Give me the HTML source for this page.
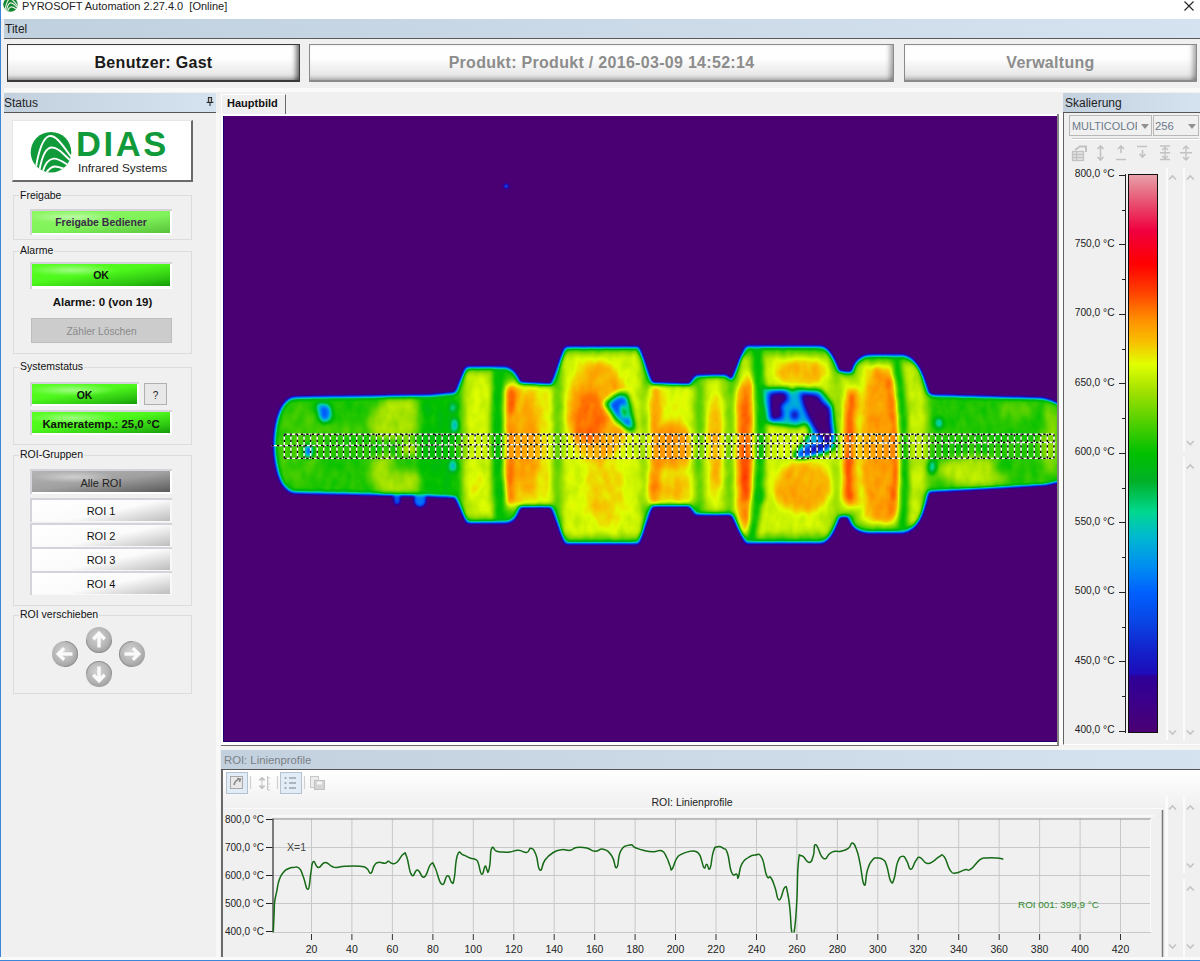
<!DOCTYPE html>
<html><head><meta charset="utf-8">
<style>
*{margin:0;padding:0;box-sizing:border-box}
html,body{width:1200px;height:961px;overflow:hidden;background:#f0f0f0;font-family:"Liberation Sans",sans-serif;font-size:12px;color:#222}
.a{position:absolute}
#win{position:absolute;left:0;top:0;width:1200px;height:961px;background:#f0f0f0}
#title{left:0;top:0;width:1200px;height:19px;background:#fff}
#menu{left:4px;top:19px;width:1196px;height:20px;background:linear-gradient(90deg,#c1d0de,#d5e3f1);border-bottom:1px solid #5a5a5a}
.btn3{background:linear-gradient(#fff 0%,#fdfdfd 40%,#eaeaea 80%,#e4e4e4 100%);border:1px solid #3a3a3a;border-bottom-width:2px;box-shadow:inset -6px 0 5px -3px rgba(0,0,0,.55),inset 0 -5px 4px -3px rgba(0,0,0,.35);font-weight:bold;font-size:16px;text-align:center;line-height:36px;letter-spacing:0.3px;color:#1a1a1a}
.btn3.dis{border-color:#8a8a8a;box-shadow:inset -6px 0 5px -3px rgba(0,0,0,.35),inset 0 -5px 4px -3px rgba(0,0,0,.25);color:#8c8c8c}
.ph{height:20px;background:linear-gradient(90deg,#c3d1df,#d5e3f0);border-bottom:1px solid #555;font-size:12px;line-height:20px;padding-left:0px}
.grp{border:1px solid #dcdcdc;}
.gl{font-size:10.5px;background:#f0f0f0;padding:0 1px;color:#111;line-height:13px}
.gbtn{background:radial-gradient(ellipse 45px 6px at 40px 6px,rgba(255,255,255,.45),rgba(255,255,255,0)),linear-gradient(172deg,#58ff22 0%,#4ef81c 45%,#2cc410 80%,#149a08 100%);font-weight:bold;font-size:10.5px;text-align:center;color:#111}
.frame{background:#fff;border-top:2px solid #d6d2da;border-left:2px solid #d6d2da}
</style></head><body>
<div id="win">
<div id="title" class="a"></div>
<div class="a" style="left:22px;top:0px;font-size:11px;line-height:13px;color:#222">PYROSOFT Automation 2.27.4.0&nbsp;&nbsp;[Online]</div>
<svg class="a" style="left:3px;top:-3px" width="15" height="15" viewBox="0 0 42 42"><defs><clipPath id="lc2"><circle cx="21" cy="21.2" r="20.3"/></clipPath></defs><circle cx="21" cy="21.2" r="20.3" fill="#15862f"/><g clip-path="url(#lc2)" fill="none" stroke="#e8f0e8" stroke-width="3"><path d="M5.8 37 C8.5 21 12 7.5 19 5.2 C26 3.2 33 15 42 27"/><path d="M9.4 39.5 C11.8 26 15 17.3 21.3 16.5 C28 15.8 34 24 42 31"/><path d="M12.4 41.5 C14.8 33 18 28 23.6 27.6 C29 27.2 33 31 42 36.5"/></g></svg>
<svg class="a" style="left:1183px;top:0px" width="12" height="12"><path d="M1.5 1.5 L10.5 10.5 M10.5 1.5 L1.5 10.5" stroke="#222" stroke-width="1.1"/></svg>
<div id="menu" class="a"><span class="a" style="left:1px;top:2.5px;font-size:12px">Titel</span></div>

<div class="a" style="left:4px;top:39px;width:1196px;height:50px;background:#f0f0f0"></div>
<div class="a btn3" style="left:7px;top:44px;width:293px;height:38px">Benutzer: Gast</div>
<div class="a btn3 dis" style="left:309px;top:44px;width:585px;height:38px">Produkt: Produkt / 2016-03-09 14:52:14</div>
<div class="a btn3 dis" style="left:904px;top:44px;width:293px;height:38px">Verwaltung</div>
<div class="a" style="left:4px;top:88px;width:1196px;height:4px;background:#fafafa"></div>

<!-- Status panel -->
<div class="a ph" style="left:4px;top:93px;width:212px">Status<svg class="a" style="left:201.5px;top:3.5px" width="8" height="10" viewBox="0 0 10 12"><path d="M2.5 0.5 H7.5 M3 0.5 V6.5 M7 0.5 V6.5 M0.8 6.5 H9.2 M5 6.5 V11" fill="none" stroke="#111" stroke-width="1.2"/><path d="M3.6 1 H6.4 V6 H3.6 Z" fill="#bbb"/></svg></div>
<div class="a" style="left:12px;top:120px;width:181px;height:62px;background:#fff;border-top:1px solid #e6e6e6;border-left:1px solid #e6e6e6;border-right:2px solid #6a6a6a;border-bottom:2px solid #6a6a6a"></div>
<svg class="a" style="left:30px;top:131px" width="42" height="42" viewBox="0 0 42 42">
 <defs><clipPath id="lc"><circle cx="21" cy="21.2" r="20.3"/></clipPath></defs>
 <circle cx="21" cy="21.2" r="20.3" fill="#119a3a"/>
 <g clip-path="url(#lc)" fill="none" stroke="#fff" stroke-width="1.9">
  <path d="M5.8 37 C8.5 21 12 7.5 19 5.2 C26 3.2 33 15 42 27"/>
  <path d="M9.4 39.5 C11.8 26 15 17.3 21.3 16.5 C28 15.8 34 24 42 31"/>
  <path d="M12.4 41.5 C14.8 33 18 28 23.6 27.6 C29 27.2 33 31 42 36.5"/>
  <path d="M15.9 42.5 C18.6 38 21 35.6 24.8 35.5 C28.5 35.4 31 36.8 42 40.5"/>
 </g>
</svg>
<div class="a" style="left:76px;top:126px;font-size:34.5px;font-weight:bold;color:#119a3a;letter-spacing:2.6px;line-height:36px">DIAS</div>
<div class="a" style="left:78px;top:160.5px;font-size:11.8px;color:#222;line-height:14px">Infrared Systems</div>

<div class="a grp" style="left:13px;top:195px;width:179px;height:45px"></div>
<div class="a gl" style="left:19px;top:189px">Freigabe</div>
<div class="a frame" style="left:30px;top:209px;width:142px;height:26px"></div>
<div class="a gbtn" style="left:32px;top:211px;width:138px;height:22px;line-height:22px;background:radial-gradient(ellipse 45px 6px at 40px 6px,rgba(255,255,255,.45),rgba(255,255,255,0)),linear-gradient(172deg,#8cf862 0%,#80f25a 55%,#58c23a 100%);color:#3b2d4a;font-size:10.5px">Freigabe Bediener</div>

<div class="a grp" style="left:13px;top:251px;width:179px;height:103px"></div>
<div class="a gl" style="left:19px;top:244px">Alarme</div>
<div class="a frame" style="left:30px;top:262px;width:142px;height:27px"></div>
<div class="a gbtn" style="left:32px;top:264px;width:138px;height:22px;line-height:23px">OK</div>
<div class="a" style="left:13px;top:296px;width:179px;text-align:center;font-weight:bold;font-size:11.5px;color:#111">Alarme: 0 (von 19)</div>
<div class="a" style="left:31px;top:318px;width:141px;height:25px;background:#cccccc;border:1px solid #bdbdbd;color:#8a8a8a;font-size:10.2px;text-align:center;line-height:25px">Zähler Löschen</div>

<div class="a grp" style="left:13px;top:367px;width:179px;height:78px"></div>
<div class="a gl" style="left:19px;top:360px">Systemstatus</div>
<div class="a frame" style="left:30px;top:382px;width:109px;height:24px"></div>
<div class="a gbtn" style="left:32px;top:384px;width:105px;height:20px;line-height:22px">OK</div>
<div class="a" style="left:144px;top:383px;width:23px;height:22px;background:#e8e8e8;border:1px solid #b0b0b0;text-align:center;line-height:23px;font-size:10px">?</div>
<div class="a frame" style="left:30px;top:410px;width:142px;height:25px"></div>
<div class="a gbtn" style="left:32px;top:412px;width:138px;height:21px;line-height:24px;font-size:11.4px">Kameratemp.: 25,0 °C</div>

<div class="a grp" style="left:13px;top:455px;width:179px;height:151px"></div>
<div class="a gl" style="left:19px;top:448px">ROI-Gruppen</div>
<div class="a frame" style="left:30px;top:469px;width:142px;height:25px"></div>
<div class="a" style="left:32px;top:471px;width:138px;height:21px;line-height:24px;text-align:center;font-size:11px;background:radial-gradient(ellipse 42px 6px at 42px 6px,rgba(255,255,255,.45),rgba(255,255,255,0)),linear-gradient(172deg,#b4b4b4 0%,#a0a0a0 50%,#5a5a5a 100%);color:#222">Alle ROI</div>
<div class="a frame" style="left:30px;top:498px;width:142px;height:24px;background:#f8f8f8"></div>
<div class="a" style="left:32px;top:500px;width:138px;height:21px;line-height:23.5px;text-align:center;font-size:11px;background:linear-gradient(168deg,#ffffff 0%,#fbfbfb 55%,#bdbdbd 100%);color:#111">ROI 1</div>
<div class="a frame" style="left:30px;top:523px;width:142px;height:24px;background:#f8f8f8"></div>
<div class="a" style="left:32px;top:525px;width:138px;height:21px;line-height:23.5px;text-align:center;font-size:11px;background:linear-gradient(168deg,#ffffff 0%,#fbfbfb 55%,#bdbdbd 100%);color:#111">ROI 2</div>
<div class="a frame" style="left:30px;top:547px;width:142px;height:24px;background:#f8f8f8"></div>
<div class="a" style="left:32px;top:549px;width:138px;height:21px;line-height:23.5px;text-align:center;font-size:11px;background:linear-gradient(168deg,#ffffff 0%,#fbfbfb 55%,#bdbdbd 100%);color:#111">ROI 3</div>
<div class="a frame" style="left:30px;top:571px;width:142px;height:24px;background:#f8f8f8"></div>
<div class="a" style="left:32px;top:573px;width:138px;height:21px;line-height:23.5px;text-align:center;font-size:11px;background:linear-gradient(168deg,#ffffff 0%,#fbfbfb 55%,#bdbdbd 100%);color:#111">ROI 4</div>


<div class="a grp" style="left:13px;top:615px;width:179px;height:79px"></div>
<div class="a gl" style="left:19px;top:608px">ROI verschieben</div>
<svg class="a" style="left:85px;top:626px" width="28" height="28" viewBox="0 0 28 28">
<defs><radialGradient id="rg99640" cx="45%" cy="40%" r="65%"><stop offset="0" stop-color="#d4d4d4"/><stop offset="0.65" stop-color="#b4b4b4"/><stop offset="1" stop-color="#9a9a9a"/></radialGradient></defs>
<circle cx="14" cy="14" r="13" fill="url(#rg99640)"/>
<circle cx="14" cy="14" r="12.6" fill="none" stroke="#8c8c8c" stroke-width="0.9" transform="rotate(0 14 14)" stroke-dasharray="40 80"/>
<g transform="rotate(0 14 14)" fill="none" stroke="#fafafa" stroke-width="3.4"><path d="M14 7.5 V21.5"/><path d="M8.3 13.2 L14 7.3 L19.7 13.2"/></g>
</svg>
<svg class="a" style="left:51px;top:640px" width="28" height="28" viewBox="0 0 28 28">
<defs><radialGradient id="rg65654" cx="45%" cy="40%" r="65%"><stop offset="0" stop-color="#d4d4d4"/><stop offset="0.65" stop-color="#b4b4b4"/><stop offset="1" stop-color="#9a9a9a"/></radialGradient></defs>
<circle cx="14" cy="14" r="13" fill="url(#rg65654)"/>
<circle cx="14" cy="14" r="12.6" fill="none" stroke="#8c8c8c" stroke-width="0.9" transform="rotate(-90 14 14)" stroke-dasharray="40 80"/>
<g transform="rotate(-90 14 14)" fill="none" stroke="#fafafa" stroke-width="3.4"><path d="M14 7.5 V21.5"/><path d="M8.3 13.2 L14 7.3 L19.7 13.2"/></g>
</svg>
<svg class="a" style="left:118px;top:640px" width="28" height="28" viewBox="0 0 28 28">
<defs><radialGradient id="rg132654" cx="45%" cy="40%" r="65%"><stop offset="0" stop-color="#d4d4d4"/><stop offset="0.65" stop-color="#b4b4b4"/><stop offset="1" stop-color="#9a9a9a"/></radialGradient></defs>
<circle cx="14" cy="14" r="13" fill="url(#rg132654)"/>
<circle cx="14" cy="14" r="12.6" fill="none" stroke="#8c8c8c" stroke-width="0.9" transform="rotate(90 14 14)" stroke-dasharray="40 80"/>
<g transform="rotate(90 14 14)" fill="none" stroke="#fafafa" stroke-width="3.4"><path d="M14 7.5 V21.5"/><path d="M8.3 13.2 L14 7.3 L19.7 13.2"/></g>
</svg>
<svg class="a" style="left:85px;top:660px" width="28" height="28" viewBox="0 0 28 28">
<defs><radialGradient id="rg99674" cx="45%" cy="40%" r="65%"><stop offset="0" stop-color="#d4d4d4"/><stop offset="0.65" stop-color="#b4b4b4"/><stop offset="1" stop-color="#9a9a9a"/></radialGradient></defs>
<circle cx="14" cy="14" r="13" fill="url(#rg99674)"/>
<circle cx="14" cy="14" r="12.6" fill="none" stroke="#8c8c8c" stroke-width="0.9" transform="rotate(180 14 14)" stroke-dasharray="40 80"/>
<g transform="rotate(180 14 14)" fill="none" stroke="#fafafa" stroke-width="3.4"><path d="M14 7.5 V21.5"/><path d="M8.3 13.2 L14 7.3 L19.7 13.2"/></g>
</svg>


<!-- center -->
<div class="a" style="left:216px;top:113px;width:4px;height:846px;background:#f8f8f8"></div>
<div class="a" style="left:221px;top:94px;width:65px;height:20px;background:#f0f0f0;border-left:1px solid #fff;border-top:1px solid #fff;border-right:1px solid #6a6a6a"></div>
<div class="a" style="left:227px;top:97px;font-weight:bold;font-size:11px;color:#111">Hauptbild</div>
<div class="a" style="left:221px;top:114px;width:838px;height:632px;background:#fff;border-right:2px solid #858585;border-bottom:1px solid #6a6a6a"></div>
<div class="a" id="img" style="left:223px;top:116px;width:834px;height:626px;background:#4b0073;border-left:1px solid #1c006c;border-bottom:1px solid #1c006c;overflow:hidden"><!--T--><svg class="a" style="left:-1px;top:0" width="835" height="626" viewBox="223 116 835 626">
<defs>
<filter id="pal" x="200" y="90" width="900" height="700" filterUnits="userSpaceOnUse" color-interpolation-filters="sRGB">
<feGaussianBlur stdDeviation="1.6"/>
<feComponentTransfer><feFuncR type="table" tableValues="0.294 0.271 0.247 0.224 0.202 0.180 0.101 0.081 0.064 0.052 0.039 0.024 0.008 0.000 0.000 0.000 0.000 0.000 0.000 0.000 0.000 0.000 0.000 0.000 0.000 0.000 0.114 0.228 0.342 0.456 0.570 0.678 0.778 0.878 0.925 0.973 0.986 1.000 1.000 1.000 1.000 1.000 1.000 0.980 0.961 0.941 0.929 0.916 0.910 0.910 0.910"/><feFuncG type="table" tableValues="0.000 0.000 0.000 0.000 0.000 0.000 0.080 0.121 0.168 0.221 0.275 0.315 0.356 0.414 0.489 0.565 0.627 0.690 0.749 0.805 0.833 0.776 0.719 0.703 0.728 0.753 0.776 0.799 0.821 0.844 0.867 0.903 0.951 1.000 0.876 0.753 0.659 0.565 0.439 0.314 0.201 0.100 0.000 0.000 0.000 0.000 0.125 0.251 0.376 0.502 0.627"/><feFuncB type="table" tableValues="0.451 0.484 0.517 0.546 0.571 0.596 0.753 0.787 0.824 0.863 0.902 0.941 0.980 0.988 0.965 0.941 0.891 0.841 0.760 0.648 0.528 0.379 0.231 0.125 0.063 0.000 0.000 0.000 0.000 0.000 0.000 0.000 0.000 0.000 0.000 0.000 0.000 0.000 0.000 0.000 0.000 0.000 0.000 0.084 0.167 0.251 0.326 0.402 0.483 0.571 0.659"/></feComponentTransfer>
</filter>
<filter id="soft" x="200" y="90" width="900" height="700" filterUnits="userSpaceOnUse" color-interpolation-filters="sRGB">
<feGaussianBlur in="SourceGraphic" stdDeviation="2.3" result="b"/>
<feTurbulence type="fractalNoise" baseFrequency="0.16 0.07" numOctaves="2" seed="7" result="n"/>
<feColorMatrix in="n" type="matrix" values="1 0 0 0 0  1 0 0 0 0  1 0 0 0 0  0 0 0 0 1" result="n2"/>
<feComposite in="b" in2="n2" operator="arithmetic" k1="0" k2="1" k3="0.065" k4="-0.0403"/>
</filter>
<filter id="soft2" x="200" y="90" width="900" height="700" filterUnits="userSpaceOnUse" color-interpolation-filters="sRGB"><feGaussianBlur stdDeviation="3.0"/></filter>
<clipPath id="silc"><path d="M 273.70 445.00 C 273.70 417.41 282.00 396.45 296.00 396.45 L 430.00 394.72 L 455.00 392.16 L 466.00 366.61 L 504.00 366.61 Q 515.00 367.33 520.00 382.15 L 551.00 383.88 L 565.00 346.38 L 639.00 346.38 L 652.30 382.66 L 689.40 383.88 L 695.00 375.30 L 726.00 374.79 L 731.50 379.59 L 745.60 345.87 L 821.50 345.87 Q 831.00 347.91 839.00 370.90 L 851.40 371.93 Q 856.00 355.57 869.40 354.55 L 902.90 354.55 Q 918.00 356.09 929.20 393.49 L 933.00 394.72 L 1041.70 397.99 Q 1052.00 400.03 1062.00 406.16 L 1062.00 480.77 Q 1050.00 483.84 1045.00 484.86 L 933.00 491.81 L 929.00 492.01 Q 920.00 531.87 902.90 533.20 L 869.40 533.20 Q 852.00 532.89 848.00 516.95 L 839.50 516.95 Q 831.00 542.09 821.50 543.62 L 745.60 543.62 L 731.50 515.01 L 695.00 515.01 L 689.40 506.32 L 652.30 506.32 L 639.00 543.93 L 565.00 543.93 L 551.00 507.14 L 520.00 507.14 Q 516.00 522.67 506.00 523.18 L 467.00 523.18 L 455.00 497.84 L 420.00 496.10 L 296.00 493.55 C 282.00 493.55 273.70 472.59 273.70 445.00 Z"/></clipPath>
</defs>
<g filter="url(#pal)">
<rect x="200" y="90" width="900" height="700" fill="#000"/>
<ellipse cx="506.3" cy="186.3" rx="2.5" ry="2" fill="rgb(76,76,76)"/>
<ellipse cx="397" cy="499" rx="3.5" ry="6" fill="rgb(56,56,56)"/>
<ellipse cx="420" cy="500" rx="6" ry="7" fill="rgb(69,69,69)"/>
<g clip-path="url(#silc)"><g filter="url(#soft)">
<rect x="200" y="90" width="900" height="700" fill="#000"/>
<path d="M 273.70 445.00 C 273.70 417.41 282.00 396.45 296.00 396.45 L 430.00 394.72 L 455.00 392.16 L 466.00 366.61 L 504.00 366.61 Q 515.00 367.33 520.00 382.15 L 551.00 383.88 L 565.00 346.38 L 639.00 346.38 L 652.30 382.66 L 689.40 383.88 L 695.00 375.30 L 726.00 374.79 L 731.50 379.59 L 745.60 345.87 L 821.50 345.87 Q 831.00 347.91 839.00 370.90 L 851.40 371.93 Q 856.00 355.57 869.40 354.55 L 902.90 354.55 Q 918.00 356.09 929.20 393.49 L 933.00 394.72 L 1041.70 397.99 Q 1052.00 400.03 1062.00 406.16 L 1062.00 480.77 Q 1050.00 483.84 1045.00 484.86 L 933.00 491.81 L 929.00 492.01 Q 920.00 531.87 902.90 533.20 L 869.40 533.20 Q 852.00 532.89 848.00 516.95 L 839.50 516.95 Q 831.00 542.09 821.50 543.62 L 745.60 543.62 L 731.50 515.01 L 695.00 515.01 L 689.40 506.32 L 652.30 506.32 L 639.00 543.93 L 565.00 543.93 L 551.00 507.14 L 520.00 507.14 Q 516.00 522.67 506.00 523.18 L 467.00 523.18 L 455.00 497.84 L 420.00 496.10 L 296.00 493.55 C 282.00 493.55 273.70 472.59 273.70 445.00 Z" fill="rgb(135,135,135)"/>
<g filter="url(#soft2)"><ellipse cx="300" cy="445" rx="24" ry="42" fill="rgb(140,140,140)"/>
<ellipse cx="340" cy="430" rx="30" ry="5" fill="rgb(143,143,143)"/>
<path d="M385 398 L425 398 L420 432 L405 440 L372 436 L368 420 Z" fill="rgb(159,159,159)"/>
<path d="M372 458 L392 455 L404 470 L428 476 L432 494 L380 494 L370 478 Z" fill="rgb(159,159,159)"/>
<ellipse cx="409" cy="449" rx="7" ry="6" fill="rgb(171,171,171)"/>
<ellipse cx="397" cy="466" rx="7" ry="6" fill="rgb(133,133,133)"/>
<path d="M418 396 L454 394 L456 496 L420 495 Z" fill="rgb(128,128,128)"/>
<path d="M463 371 L498 371 Q492 445 498 519 L463 519 Z" fill="rgb(166,166,166)"/>
<ellipse cx="476" cy="484" rx="9" ry="12" fill="rgb(173,173,173)"/>
<ellipse cx="478" cy="410" rx="10" ry="20" fill="rgb(168,168,168)"/>
<path d="M506 369 L520 382 L520 507 L506 521 Z" fill="rgb(148,148,148)"/>
<path d="M505 384 L553 384 L553 506 L505 506 Z" fill="rgb(176,176,176)"/>
<path d="M503 384 L516 384 Q510 445 516 506 L503 506 Z" fill="rgb(196,196,196)"/>
<ellipse cx="510" cy="400" rx="6" ry="14" fill="rgb(204,204,204)"/>
<ellipse cx="508" cy="470" rx="6" ry="12" fill="rgb(204,204,204)"/>
<ellipse cx="528" cy="445" rx="12" ry="50" fill="rgb(187,187,187)"/>
<path d="M540 386 L550 386 L550 504 L540 504 Z" fill="rgb(170,170,170)"/>
<path d="M546 392 L553 392 L553 500 L546 500 Z" fill="rgb(181,181,181)"/>
<path d="M561 352 L643 352 L643 538 L561 538 Z" fill="rgb(168,168,168)"/>
<ellipse cx="598" cy="412" rx="31" ry="50" fill="rgb(185,185,185)"/>
<ellipse cx="589" cy="418" rx="17" ry="26" fill="rgb(196,196,196)"/>
<ellipse cx="604" cy="494" rx="19" ry="34" fill="rgb(177,177,177)"/>
<path d="M650 384 L695 384 L695 506 L650 506 Z" fill="rgb(170,170,170)"/>
<path d="M648 386 L660 386 L660 504 L648 504 Z" fill="rgb(190,190,190)"/>
<ellipse cx="652" cy="488" rx="5" ry="16" fill="rgb(201,201,201)"/>
<ellipse cx="672" cy="446" rx="21" ry="24" fill="rgb(189,189,189)"/>
<ellipse cx="678" cy="490" rx="16" ry="14" fill="rgb(181,181,181)"/>
<path d="M695 377 L703 377 L703 513 L695 513 Z" fill="rgb(135,135,135)"/>
<path d="M703 377 L726 377 L726 513 L703 513 Z" fill="rgb(167,167,167)"/>
<ellipse cx="716" cy="446" rx="8" ry="52" fill="rgb(184,184,184)"/>
<path d="M725 377 L733 381 L733 513 L725 513 Z" fill="rgb(143,143,143)"/>
<path d="M737 354 L830 354 Q843 445 830 536 L737 536 Z" fill="rgb(166,166,166)"/>
<path d="M735 392 L748 376 L756 380 Q751 445 757 538 L750 540 L735 512 Z" fill="rgb(193,193,193)"/>
<ellipse cx="745" cy="470" rx="6" ry="32" fill="rgb(204,204,204)"/>
<ellipse cx="744" cy="420" rx="5" ry="16" fill="rgb(201,201,201)"/>
<ellipse cx="801" cy="372" rx="27" ry="13" fill="rgb(182,182,182)"/>
<ellipse cx="803" cy="487" rx="29" ry="26" fill="rgb(184,184,184)"/>
<ellipse cx="792" cy="498" rx="13" ry="10" fill="rgb(187,187,187)"/>
<path d="M832 352 Q847 445 832 538 L840 516 L840 372 Z" fill="rgb(158,158,158)"/>
<path d="M839 373 L930 396 L930 490 L839 516 Z" fill="rgb(164,164,164)"/>
<path d="M855 362 L924 362 L924 526 L855 526 Z" fill="rgb(164,164,164)"/>
<path d="M848 390 Q841 447 845 505 L856 505 Q851 447 857 390 Z" fill="rgb(208,208,208)"/>
<path d="M869 366 Q852 445 868 524 L893 524 Q910 445 889 366 Z" fill="rgb(187,187,187)"/>
<path d="M885 378 Q903 445 889 515 L897 515 Q911 445 893 378 Z" fill="rgb(204,204,204)"/>
<path d="M928 396 L1062 396 L1062 492 L928 492 Z" fill="rgb(135,135,135)"/>
<ellipse cx="1015" cy="410" rx="18" ry="8" fill="rgb(145,145,145)"/>
<ellipse cx="975" cy="472" rx="38" ry="15" fill="rgb(162,162,162)"/>
<ellipse cx="1005" cy="467" rx="12" ry="10" fill="rgb(135,135,135)"/>
<ellipse cx="1050" cy="440" rx="10" ry="36" fill="rgb(153,153,153)"/>
<ellipse cx="1041" cy="423" rx="4" ry="10" fill="rgb(125,125,125)"/></g>
<ellipse cx="453" cy="408" rx="3" ry="5" fill="rgb(87,87,87)"/>
<ellipse cx="455" cy="425" rx="3" ry="7" fill="rgb(76,76,76)"/>
<ellipse cx="453" cy="466" rx="3" ry="6" fill="rgb(71,71,71)"/>
<ellipse cx="325" cy="413" rx="6" ry="9" fill="rgb(61,61,61)"/>
<ellipse cx="320" cy="407" rx="3" ry="4" fill="rgb(76,76,76)"/>
<ellipse cx="308.5" cy="451" rx="3.5" ry="6" fill="rgb(46,46,46)"/>
<path d="M493 369 L506 369 Q500 445 507 521 L495 521 Q488 445 493 369 Z" fill="rgb(128,128,128)"/>
<path d="M603 403 L620 391 L628 392 L636 426 L633 434 L616 422 Z" fill="rgb(128,128,128)"/>
<path d="M608 404 L620 396 L626 397 L632 424 L630 429 L618 418 Z" fill="rgb(56,56,56)"/>
<ellipse cx="624" cy="412" rx="3" ry="8" fill="rgb(133,133,133)" transform="rotate(-15 624 412)"/>
<path d="M750 349 L762 349 Q772 445 756 541 L747 541 Q762 445 750 349 Z" fill="rgb(128,128,128)"/>
<ellipse cx="760" cy="495" rx="5" ry="9" fill="rgb(122,122,122)"/>
<path d="M763 388 L788 388 L792 391 L796 388 L821 390 L828 399 L832 405 L835 432 L836 447 L827 453 L800 459 L793 456 L804 441 L811 432 L806 423 L797 427 L790 426 L767 423 Z" fill="rgb(89,89,89)"/>
<path d="M769 393 L786 392 L788 400 L781 405 L783 418 L771 420 Z" fill="rgb(5,5,5)"/>
<ellipse cx="794.5" cy="415" rx="3.5" ry="4.5" fill="rgb(15,15,15)"/>
<path d="M800 393 L818 395 L822 402 L830 408 L832 438 L827 444 L818 434 L812 424 L805 410 Z" fill="rgb(5,5,5)"/>
<ellipse cx="814" cy="450" rx="19" ry="4.5" fill="rgb(46,46,46)" transform="rotate(-20 814 450)"/>
<ellipse cx="818" cy="447" rx="10" ry="2.5" fill="rgb(15,15,15)" transform="rotate(-20 818 447)"/>
<path d="M892 357 L901 357 Q913 445 907 531 L898 531 Q904 445 892 357 Z" fill="rgb(128,128,128)"/>
<ellipse cx="939" cy="423" rx="3" ry="5" fill="rgb(76,76,76)"/>
<ellipse cx="932" cy="467" rx="3" ry="7" fill="rgb(84,84,84)"/>
</g></g>
</g>
<g fill="none" stroke-width="1.4">
<path d="M284.3 434.3 H1053.93 M284.3 458.4 H1053.93 M271.5 445.6 L1055.5 442.3" stroke="#fff"/>
<path d="M284.3 434.3 H1053.93 M284.3 458.4 H1053.93 M271.5 445.6 L1055.5 442.3" stroke="#000" stroke-dasharray="2.3 3.2"/>
<path d="M284.30 434.3 V458.4 M290.88 434.3 V458.4 M297.46 434.3 V458.4 M304.03 434.3 V458.4 M310.61 434.3 V458.4 M317.19 434.3 V458.4 M323.77 434.3 V458.4 M330.35 434.3 V458.4 M336.92 434.3 V458.4 M343.50 434.3 V458.4 M350.08 434.3 V458.4 M356.66 434.3 V458.4 M363.24 434.3 V458.4 M369.81 434.3 V458.4 M376.39 434.3 V458.4 M382.97 434.3 V458.4 M389.55 434.3 V458.4 M396.13 434.3 V458.4 M402.70 434.3 V458.4 M409.28 434.3 V458.4 M415.86 434.3 V458.4 M422.44 434.3 V458.4 M429.02 434.3 V458.4 M435.59 434.3 V458.4 M442.17 434.3 V458.4 M448.75 434.3 V458.4 M455.33 434.3 V458.4 M461.91 434.3 V458.4 M468.48 434.3 V458.4 M475.06 434.3 V458.4 M481.64 434.3 V458.4 M488.22 434.3 V458.4 M494.80 434.3 V458.4 M501.37 434.3 V458.4 M507.95 434.3 V458.4 M514.53 434.3 V458.4 M521.11 434.3 V458.4 M527.69 434.3 V458.4 M534.26 434.3 V458.4 M540.84 434.3 V458.4 M547.42 434.3 V458.4 M554.00 434.3 V458.4 M560.58 434.3 V458.4 M567.15 434.3 V458.4 M573.73 434.3 V458.4 M580.31 434.3 V458.4 M586.89 434.3 V458.4 M593.47 434.3 V458.4 M600.04 434.3 V458.4 M606.62 434.3 V458.4 M613.20 434.3 V458.4 M619.78 434.3 V458.4 M626.36 434.3 V458.4 M632.93 434.3 V458.4 M639.51 434.3 V458.4 M646.09 434.3 V458.4 M652.67 434.3 V458.4 M659.25 434.3 V458.4 M665.82 434.3 V458.4 M672.40 434.3 V458.4 M678.98 434.3 V458.4 M685.56 434.3 V458.4 M692.14 434.3 V458.4 M698.71 434.3 V458.4 M705.29 434.3 V458.4 M711.87 434.3 V458.4 M718.45 434.3 V458.4 M725.03 434.3 V458.4 M731.60 434.3 V458.4 M738.18 434.3 V458.4 M744.76 434.3 V458.4 M751.34 434.3 V458.4 M757.92 434.3 V458.4 M764.49 434.3 V458.4 M771.07 434.3 V458.4 M777.65 434.3 V458.4 M784.23 434.3 V458.4 M790.81 434.3 V458.4 M797.38 434.3 V458.4 M803.96 434.3 V458.4 M810.54 434.3 V458.4 M817.12 434.3 V458.4 M823.70 434.3 V458.4 M830.27 434.3 V458.4 M836.85 434.3 V458.4 M843.43 434.3 V458.4 M850.01 434.3 V458.4 M856.59 434.3 V458.4 M863.16 434.3 V458.4 M869.74 434.3 V458.4 M876.32 434.3 V458.4 M882.90 434.3 V458.4 M889.48 434.3 V458.4 M896.05 434.3 V458.4 M902.63 434.3 V458.4 M909.21 434.3 V458.4 M915.79 434.3 V458.4 M922.37 434.3 V458.4 M928.94 434.3 V458.4 M935.52 434.3 V458.4 M942.10 434.3 V458.4 M948.68 434.3 V458.4 M955.26 434.3 V458.4 M961.83 434.3 V458.4 M968.41 434.3 V458.4 M974.99 434.3 V458.4 M981.57 434.3 V458.4 M988.15 434.3 V458.4 M994.72 434.3 V458.4 M1001.30 434.3 V458.4 M1007.88 434.3 V458.4 M1014.46 434.3 V458.4 M1021.04 434.3 V458.4 M1027.61 434.3 V458.4 M1034.19 434.3 V458.4 M1040.77 434.3 V458.4 M1047.35 434.3 V458.4 M1053.93 434.3 V458.4 " stroke="#fff"/>
<path d="M284.30 434.3 V458.4 M290.88 434.3 V458.4 M297.46 434.3 V458.4 M304.03 434.3 V458.4 M310.61 434.3 V458.4 M317.19 434.3 V458.4 M323.77 434.3 V458.4 M330.35 434.3 V458.4 M336.92 434.3 V458.4 M343.50 434.3 V458.4 M350.08 434.3 V458.4 M356.66 434.3 V458.4 M363.24 434.3 V458.4 M369.81 434.3 V458.4 M376.39 434.3 V458.4 M382.97 434.3 V458.4 M389.55 434.3 V458.4 M396.13 434.3 V458.4 M402.70 434.3 V458.4 M409.28 434.3 V458.4 M415.86 434.3 V458.4 M422.44 434.3 V458.4 M429.02 434.3 V458.4 M435.59 434.3 V458.4 M442.17 434.3 V458.4 M448.75 434.3 V458.4 M455.33 434.3 V458.4 M461.91 434.3 V458.4 M468.48 434.3 V458.4 M475.06 434.3 V458.4 M481.64 434.3 V458.4 M488.22 434.3 V458.4 M494.80 434.3 V458.4 M501.37 434.3 V458.4 M507.95 434.3 V458.4 M514.53 434.3 V458.4 M521.11 434.3 V458.4 M527.69 434.3 V458.4 M534.26 434.3 V458.4 M540.84 434.3 V458.4 M547.42 434.3 V458.4 M554.00 434.3 V458.4 M560.58 434.3 V458.4 M567.15 434.3 V458.4 M573.73 434.3 V458.4 M580.31 434.3 V458.4 M586.89 434.3 V458.4 M593.47 434.3 V458.4 M600.04 434.3 V458.4 M606.62 434.3 V458.4 M613.20 434.3 V458.4 M619.78 434.3 V458.4 M626.36 434.3 V458.4 M632.93 434.3 V458.4 M639.51 434.3 V458.4 M646.09 434.3 V458.4 M652.67 434.3 V458.4 M659.25 434.3 V458.4 M665.82 434.3 V458.4 M672.40 434.3 V458.4 M678.98 434.3 V458.4 M685.56 434.3 V458.4 M692.14 434.3 V458.4 M698.71 434.3 V458.4 M705.29 434.3 V458.4 M711.87 434.3 V458.4 M718.45 434.3 V458.4 M725.03 434.3 V458.4 M731.60 434.3 V458.4 M738.18 434.3 V458.4 M744.76 434.3 V458.4 M751.34 434.3 V458.4 M757.92 434.3 V458.4 M764.49 434.3 V458.4 M771.07 434.3 V458.4 M777.65 434.3 V458.4 M784.23 434.3 V458.4 M790.81 434.3 V458.4 M797.38 434.3 V458.4 M803.96 434.3 V458.4 M810.54 434.3 V458.4 M817.12 434.3 V458.4 M823.70 434.3 V458.4 M830.27 434.3 V458.4 M836.85 434.3 V458.4 M843.43 434.3 V458.4 M850.01 434.3 V458.4 M856.59 434.3 V458.4 M863.16 434.3 V458.4 M869.74 434.3 V458.4 M876.32 434.3 V458.4 M882.90 434.3 V458.4 M889.48 434.3 V458.4 M896.05 434.3 V458.4 M902.63 434.3 V458.4 M909.21 434.3 V458.4 M915.79 434.3 V458.4 M922.37 434.3 V458.4 M928.94 434.3 V458.4 M935.52 434.3 V458.4 M942.10 434.3 V458.4 M948.68 434.3 V458.4 M955.26 434.3 V458.4 M961.83 434.3 V458.4 M968.41 434.3 V458.4 M974.99 434.3 V458.4 M981.57 434.3 V458.4 M988.15 434.3 V458.4 M994.72 434.3 V458.4 M1001.30 434.3 V458.4 M1007.88 434.3 V458.4 M1014.46 434.3 V458.4 M1021.04 434.3 V458.4 M1027.61 434.3 V458.4 M1034.19 434.3 V458.4 M1040.77 434.3 V458.4 M1047.35 434.3 V458.4 M1053.93 434.3 V458.4 " stroke="#000" stroke-dasharray="2.3 3.2"/>
</g>
</svg><!--/T--></div>

<!-- right panel -->
<div class="a ph" style="left:1063px;top:93px;width:137px;padding-left:2px">Skalierung</div>
<div class="a" style="left:1059px;top:113px;width:4px;height:632px;background:#fdfdfd"></div>
<div class="a" style="left:1063px;top:113px;width:137px;height:632px;border-left:1.6px solid #646464;border-bottom:1px solid #fff"></div>
<div class="a" style="left:1069px;top:115px;width:83px;height:21px;border:1px solid #b8b8b8;background:#f0f0f0;overflow:hidden"><span class="a" style="left:2px;top:3.5px;font-size:10.9px;color:#6b7a8a;white-space:nowrap;width:65px;overflow:hidden">MULTICOLOR</span><span class="a" style="left:71px;top:8px;width:0;height:0;border-left:4px solid transparent;border-right:4px solid transparent;border-top:5px solid #909090"></span></div>
<div class="a" style="left:1153px;top:115px;width:46px;height:21px;border:1px solid #b8b8b8;background:#f0f0f0"><span class="a" style="left:1px;top:3.5px;font-size:11.3px;color:#6b7a8a">256</span><span class="a" style="left:34px;top:8px;width:0;height:0;border-left:4px solid transparent;border-right:4px solid transparent;border-top:5px solid #909090"></span></div>
<div class="a" style="left:1072px;top:138px;width:127px;height:1px;background:#c8c8c8"></div>
<div class="a" style="left:1072px;top:139px;width:127px;height:1px;background:#fff"></div>
<svg class="a" style="left:1068px;top:142px" width="132" height="24" viewBox="1068 142 132 24"><g fill="none" stroke="#c2c2c2" stroke-width="1.3"><rect x="1072.5" y="151.5" width="11" height="9" fill="#e4e4e4"/><path d="M1072.5 154.5 H1083.5 M1072.5 157.5 H1083.5 M1076.5 151.5 V160.5"/><path d="M1075 150 L1080 146.5 L1086 146.5 L1086 152" stroke-width="2"/><path d="M1100.5 146 V160 M1097.5 149 L1100.5 146 L1103.5 149 M1097.5 157 L1100.5 160 L1103.5 157" stroke-width="1.6"/><path d="M1121 146 V153 M1118 149 L1121 146 L1124 149 M1116 159.5 H1126" stroke-width="1.6"/><path d="M1137 146.5 H1147 M1142.5 150 V157 M1139.5 154 L1142.5 157 L1145.5 154" stroke-width="1.6"/><path d="M1160 146 H1170 M1160 159.5 H1170 M1165 147 V159 M1162 150 L1165 147.5 L1168 150 M1162 156 L1165 158.5 L1168 156 M1160 152.8 H1170" stroke-width="1.4"/><path d="M1180 152.8 H1192 M1186 146 V160 M1183 149 L1186 146 L1189 149 M1183 157 L1186 160 L1189 157" stroke-width="1.4"/></g></svg>

<div class="a" style="left:1125px;top:174px;width:1px;height:559px;background:#222"></div>
<div class="a" style="left:1119px;top:175px;width:7px;height:1px;background:#222"></div>
<div class="a" style="left:1122px;top:210px;width:4px;height:1px;background:#222"></div>
<div class="a" style="left:1119px;top:244px;width:7px;height:1px;background:#222"></div>
<div class="a" style="left:1122px;top:279px;width:4px;height:1px;background:#222"></div>
<div class="a" style="left:1119px;top:314px;width:7px;height:1px;background:#222"></div>
<div class="a" style="left:1122px;top:349px;width:4px;height:1px;background:#222"></div>
<div class="a" style="left:1119px;top:383px;width:7px;height:1px;background:#222"></div>
<div class="a" style="left:1122px;top:418px;width:4px;height:1px;background:#222"></div>
<div class="a" style="left:1119px;top:453px;width:7px;height:1px;background:#222"></div>
<div class="a" style="left:1122px;top:488px;width:4px;height:1px;background:#222"></div>
<div class="a" style="left:1119px;top:522px;width:7px;height:1px;background:#222"></div>
<div class="a" style="left:1122px;top:557px;width:4px;height:1px;background:#222"></div>
<div class="a" style="left:1119px;top:592px;width:7px;height:1px;background:#222"></div>
<div class="a" style="left:1122px;top:627px;width:4px;height:1px;background:#222"></div>
<div class="a" style="left:1119px;top:661px;width:7px;height:1px;background:#222"></div>
<div class="a" style="left:1122px;top:696px;width:4px;height:1px;background:#222"></div>
<div class="a" style="left:1119px;top:731px;width:7px;height:1px;background:#222"></div>
<div class="a" style="left:1059.5px;top:167.2px;width:55px;text-align:right;font-size:10.2px;line-height:13px;color:#222">800,0 °C</div>
<div class="a" style="left:1059.5px;top:236.7px;width:55px;text-align:right;font-size:10.2px;line-height:13px;color:#222">750,0 °C</div>
<div class="a" style="left:1059.5px;top:306.2px;width:55px;text-align:right;font-size:10.2px;line-height:13px;color:#222">700,0 °C</div>
<div class="a" style="left:1059.5px;top:375.6px;width:55px;text-align:right;font-size:10.2px;line-height:13px;color:#222">650,0 °C</div>
<div class="a" style="left:1059.5px;top:445.1px;width:55px;text-align:right;font-size:10.2px;line-height:13px;color:#222">600,0 °C</div>
<div class="a" style="left:1059.5px;top:514.6px;width:55px;text-align:right;font-size:10.2px;line-height:13px;color:#222">550,0 °C</div>
<div class="a" style="left:1059.5px;top:584.1px;width:55px;text-align:right;font-size:10.2px;line-height:13px;color:#222">500,0 °C</div>
<div class="a" style="left:1059.5px;top:653.6px;width:55px;text-align:right;font-size:10.2px;line-height:13px;color:#222">450,0 °C</div>
<div class="a" style="left:1059.5px;top:723.0px;width:55px;text-align:right;font-size:10.2px;line-height:13px;color:#222">400,0 °C</div>

<div class="a" id="cbar" style="left:1128px;top:174px;width:30px;height:559px;border:1px solid #111;background:linear-gradient(180deg,rgb(232,160,168) 0.0%,rgb(232,80,112) 5.0%,rgb(240,0,64) 10.0%,rgb(255,0,0) 16.0%,rgb(255,64,0) 21.0%,rgb(255,144,0) 26.0%,rgb(248,192,0) 30.0%,rgb(224,255,0) 34.0%,rgb(160,224,0) 39.0%,rgb(80,208,0) 44.5%,rgb(0,192,0) 50.0%,rgb(0,176,40) 55.0%,rgb(0,216,144) 60.5%,rgb(0,184,208) 65.0%,rgb(0,144,240) 70.0%,rgb(0,96,255) 75.0%,rgb(10,70,230) 80.0%,rgb(18,36,205) 85.0%,rgb(30,12,185) 89.6%,rgb(46,0,152) 90.0%,rgb(60,0,136) 95.0%,rgb(75,0,115) 100.0%)"></div>

<!-- bottom panel -->
<div class="a" style="left:221px;top:746px;width:979px;height:4px;background:#f5f5f5"></div>
<div class="a ph" style="left:221px;top:750px;width:979px;color:#7a7f85;padding-left:3px;font-size:11.3px">ROI: Linienprofile</div>
<div class="a" style="left:221px;top:770px;width:979px;height:189px;border-left:2px solid #6a6a6a;background:#f0f0f0"></div>
<div class="a" style="left:223px;top:770px;width:977px;height:38px;background:linear-gradient(#fff,#f0f0f0)"></div>
<div class="a" style="left:223px;top:808px;width:940px;height:1px;background:#fafafa"></div>
<svg class="a" style="left:222px;top:770px" width="110" height="28" viewBox="222 770 110 28">
<rect x="226.5" y="772.5" width="21" height="21" fill="#e2ecf7" stroke="#b4c2d0"/>
<rect x="230.5" y="776.5" width="12" height="12" fill="#e8e8e8" stroke="#a8a8a8"/>
<path d="M234 785 Q235 780 240 779 M237 778.5 L240.5 779 L239.5 782" fill="none" stroke="#8a8a8a" stroke-width="1.5"/>
<path d="M250.5 776 V789 M277.5 776 V789 M304.5 776 V789" stroke="#d0d0d0" stroke-width="1.2"/>
<path d="M262 777 L265 780 L259 780 Z M262 789 L265 786 L259 786 Z M262 780 V786" fill="#c4c4c4" stroke="#c4c4c4"/>
<path d="M267.5 776 V790 M267.5 778 H270 M267.5 781 H269 M267.5 784 H270 M267.5 787 H269 M267.5 790 H270" stroke="#c4c4c4" stroke-width="1"/>
<rect x="280.5" y="772.5" width="21" height="21" fill="#e2ecf7" stroke="#b4c2d0"/>
<path d="M289 778 H296 M289 783 H296 M289 788 H296" stroke="#9aa4ae" stroke-width="1.3"/>
<circle cx="285.5" cy="778" r="1.1" fill="#9aa4ae"/><circle cx="285.5" cy="783" r="1.1" fill="#9aa4ae"/><circle cx="285.5" cy="788" r="1.1" fill="#9aa4ae"/>
<rect x="310.5" y="776.5" width="8" height="11" fill="#ececec" stroke="#c8c8c8"/>
<rect x="314.5" y="780.5" width="10" height="9" fill="#d4d4d4" stroke="#c0c0c0"/>
<rect x="317" y="781.5" width="5" height="3" fill="#f4f4f4"/>
</svg>

<svg class="a" style="left:221px;top:805px" width="979" height="154" viewBox="0 0 979 154">
<rect x="52.5" y="14" width="877" height="113" fill="#f0f0f0"/>
<rect x="50" y="10" width="883" height="2" fill="#f8f8f8"/>
<line x1="90.5" y1="14" x2="90.5" y2="127" stroke="#c8c8c8" stroke-width="1"/>
<line x1="90.5" y1="129" x2="90.5" y2="135" stroke="#333" stroke-width="1"/>
<text x="90.5" y="148" font-size="10.5" text-anchor="middle" fill="#222" font-family="Liberation Sans">20</text>
<line x1="130.9" y1="14" x2="130.9" y2="127" stroke="#c8c8c8" stroke-width="1"/>
<line x1="130.9" y1="129" x2="130.9" y2="135" stroke="#333" stroke-width="1"/>
<text x="130.9" y="148" font-size="10.5" text-anchor="middle" fill="#222" font-family="Liberation Sans">40</text>
<line x1="171.4" y1="14" x2="171.4" y2="127" stroke="#c8c8c8" stroke-width="1"/>
<line x1="171.4" y1="129" x2="171.4" y2="135" stroke="#333" stroke-width="1"/>
<text x="171.4" y="148" font-size="10.5" text-anchor="middle" fill="#222" font-family="Liberation Sans">60</text>
<line x1="211.9" y1="14" x2="211.9" y2="127" stroke="#c8c8c8" stroke-width="1"/>
<line x1="211.9" y1="129" x2="211.9" y2="135" stroke="#333" stroke-width="1"/>
<text x="211.9" y="148" font-size="10.5" text-anchor="middle" fill="#222" font-family="Liberation Sans">80</text>
<line x1="252.3" y1="14" x2="252.3" y2="127" stroke="#c8c8c8" stroke-width="1"/>
<line x1="252.3" y1="129" x2="252.3" y2="135" stroke="#333" stroke-width="1"/>
<text x="252.3" y="148" font-size="10.5" text-anchor="middle" fill="#222" font-family="Liberation Sans">100</text>
<line x1="292.8" y1="14" x2="292.8" y2="127" stroke="#c8c8c8" stroke-width="1"/>
<line x1="292.8" y1="129" x2="292.8" y2="135" stroke="#333" stroke-width="1"/>
<text x="292.8" y="148" font-size="10.5" text-anchor="middle" fill="#222" font-family="Liberation Sans">120</text>
<line x1="333.2" y1="14" x2="333.2" y2="127" stroke="#c8c8c8" stroke-width="1"/>
<line x1="333.2" y1="129" x2="333.2" y2="135" stroke="#333" stroke-width="1"/>
<text x="333.2" y="148" font-size="10.5" text-anchor="middle" fill="#222" font-family="Liberation Sans">140</text>
<line x1="373.7" y1="14" x2="373.7" y2="127" stroke="#c8c8c8" stroke-width="1"/>
<line x1="373.7" y1="129" x2="373.7" y2="135" stroke="#333" stroke-width="1"/>
<text x="373.7" y="148" font-size="10.5" text-anchor="middle" fill="#222" font-family="Liberation Sans">160</text>
<line x1="414.1" y1="14" x2="414.1" y2="127" stroke="#c8c8c8" stroke-width="1"/>
<line x1="414.1" y1="129" x2="414.1" y2="135" stroke="#333" stroke-width="1"/>
<text x="414.1" y="148" font-size="10.5" text-anchor="middle" fill="#222" font-family="Liberation Sans">180</text>
<line x1="454.5" y1="14" x2="454.5" y2="127" stroke="#c8c8c8" stroke-width="1"/>
<line x1="454.5" y1="129" x2="454.5" y2="135" stroke="#333" stroke-width="1"/>
<text x="454.5" y="148" font-size="10.5" text-anchor="middle" fill="#222" font-family="Liberation Sans">200</text>
<line x1="495.0" y1="14" x2="495.0" y2="127" stroke="#c8c8c8" stroke-width="1"/>
<line x1="495.0" y1="129" x2="495.0" y2="135" stroke="#333" stroke-width="1"/>
<text x="495.0" y="148" font-size="10.5" text-anchor="middle" fill="#222" font-family="Liberation Sans">220</text>
<line x1="535.5" y1="14" x2="535.5" y2="127" stroke="#c8c8c8" stroke-width="1"/>
<line x1="535.5" y1="129" x2="535.5" y2="135" stroke="#333" stroke-width="1"/>
<text x="535.5" y="148" font-size="10.5" text-anchor="middle" fill="#222" font-family="Liberation Sans">240</text>
<line x1="575.9" y1="14" x2="575.9" y2="127" stroke="#c8c8c8" stroke-width="1"/>
<line x1="575.9" y1="129" x2="575.9" y2="135" stroke="#333" stroke-width="1"/>
<text x="575.9" y="148" font-size="10.5" text-anchor="middle" fill="#222" font-family="Liberation Sans">260</text>
<line x1="616.4" y1="14" x2="616.4" y2="127" stroke="#c8c8c8" stroke-width="1"/>
<line x1="616.4" y1="129" x2="616.4" y2="135" stroke="#333" stroke-width="1"/>
<text x="616.4" y="148" font-size="10.5" text-anchor="middle" fill="#222" font-family="Liberation Sans">280</text>
<line x1="656.8" y1="14" x2="656.8" y2="127" stroke="#c8c8c8" stroke-width="1"/>
<line x1="656.8" y1="129" x2="656.8" y2="135" stroke="#333" stroke-width="1"/>
<text x="656.8" y="148" font-size="10.5" text-anchor="middle" fill="#222" font-family="Liberation Sans">300</text>
<line x1="697.2" y1="14" x2="697.2" y2="127" stroke="#c8c8c8" stroke-width="1"/>
<line x1="697.2" y1="129" x2="697.2" y2="135" stroke="#333" stroke-width="1"/>
<text x="697.2" y="148" font-size="10.5" text-anchor="middle" fill="#222" font-family="Liberation Sans">320</text>
<line x1="737.7" y1="14" x2="737.7" y2="127" stroke="#c8c8c8" stroke-width="1"/>
<line x1="737.7" y1="129" x2="737.7" y2="135" stroke="#333" stroke-width="1"/>
<text x="737.7" y="148" font-size="10.5" text-anchor="middle" fill="#222" font-family="Liberation Sans">340</text>
<line x1="778.2" y1="14" x2="778.2" y2="127" stroke="#c8c8c8" stroke-width="1"/>
<line x1="778.2" y1="129" x2="778.2" y2="135" stroke="#333" stroke-width="1"/>
<text x="778.2" y="148" font-size="10.5" text-anchor="middle" fill="#222" font-family="Liberation Sans">360</text>
<line x1="818.6" y1="14" x2="818.6" y2="127" stroke="#c8c8c8" stroke-width="1"/>
<line x1="818.6" y1="129" x2="818.6" y2="135" stroke="#333" stroke-width="1"/>
<text x="818.6" y="148" font-size="10.5" text-anchor="middle" fill="#222" font-family="Liberation Sans">380</text>
<line x1="859.1" y1="14" x2="859.1" y2="127" stroke="#c8c8c8" stroke-width="1"/>
<line x1="859.1" y1="129" x2="859.1" y2="135" stroke="#333" stroke-width="1"/>
<text x="859.1" y="148" font-size="10.5" text-anchor="middle" fill="#222" font-family="Liberation Sans">400</text>
<line x1="899.5" y1="14" x2="899.5" y2="127" stroke="#c8c8c8" stroke-width="1"/>
<line x1="899.5" y1="129" x2="899.5" y2="135" stroke="#333" stroke-width="1"/>
<text x="899.5" y="148" font-size="10.5" text-anchor="middle" fill="#222" font-family="Liberation Sans">420</text>
<line x1="45" y1="14.5" x2="52" y2="14.5" stroke="#222" stroke-width="1"/>
<text x="43" y="18.0" font-size="10" text-anchor="end" fill="#222" font-family="Liberation Sans">800,0 °C</text>
<line x1="52" y1="42.5" x2="929" y2="42.5" stroke="#c8c8c8" stroke-width="1"/>
<line x1="45" y1="42.5" x2="52" y2="42.5" stroke="#222" stroke-width="1"/>
<text x="43" y="46.0" font-size="10" text-anchor="end" fill="#222" font-family="Liberation Sans">700,0 °C</text>
<line x1="52" y1="70.5" x2="929" y2="70.5" stroke="#c8c8c8" stroke-width="1"/>
<line x1="45" y1="70.5" x2="52" y2="70.5" stroke="#222" stroke-width="1"/>
<text x="43" y="74.0" font-size="10" text-anchor="end" fill="#222" font-family="Liberation Sans">600,0 °C</text>
<line x1="52" y1="98.5" x2="929" y2="98.5" stroke="#c8c8c8" stroke-width="1"/>
<line x1="45" y1="98.5" x2="52" y2="98.5" stroke="#222" stroke-width="1"/>
<text x="43" y="102.0" font-size="10" text-anchor="end" fill="#222" font-family="Liberation Sans">500,0 °C</text>
<line x1="45" y1="126.5" x2="52" y2="126.5" stroke="#222" stroke-width="1"/>
<text x="43" y="130.0" font-size="10" text-anchor="end" fill="#222" font-family="Liberation Sans">400,0 °C</text>
<line x1="52" y1="14" x2="930" y2="14" stroke="#8a8a8a" stroke-width="1"/>
<line x1="52" y1="127.5" x2="930" y2="127.5" stroke="#c8c8c8" stroke-width="1"/>
<line x1="929.5" y1="14" x2="929.5" y2="127" stroke="#fafafa" stroke-width="1"/>
<line x1="52" y1="13.5" x2="52" y2="127.5" stroke="#555" stroke-width="1.5"/>
<defs><clipPath id="plotc"><rect x="50" y="12" width="880" height="115.5"/></clipPath></defs><path clip-path="url(#plotc)" d="M52.3 126.7 C52.5 121.4 52.8 114.7 53.2 106.7 C53.6 98.7 53.0 102.0 53.7 96.7 C54.4 91.4 54.5 92.5 55.7 86.7 C56.9 80.9 56.4 80.1 58.2 75.0 C60.0 69.9 59.9 70.5 62.3 67.5 C64.7 64.5 64.6 65.0 67.3 63.7 C70.0 62.4 69.4 62.6 72.3 62.5 C75.2 62.4 75.5 60.8 78.2 63.3 C80.9 65.8 80.0 66.1 82.3 71.7 C84.6 77.3 85.0 85.1 87.0 84.2 C89.0 83.3 88.4 75.6 89.8 68.3 C91.2 61.0 90.3 58.2 92.3 56.7 C94.3 55.2 94.2 62.3 97.3 62.5 C100.4 62.7 100.4 57.8 104.0 57.5 C107.6 57.2 107.6 60.0 110.7 61.3 C113.8 62.6 112.2 62.5 115.7 62.5 C119.2 62.5 117.8 61.6 124.0 61.3 C130.2 61.0 133.2 60.8 139.0 61.3 C144.8 61.8 142.8 61.4 145.7 63.3 C148.6 65.2 147.8 69.0 149.8 68.3 C151.8 67.6 151.2 63.7 153.2 60.8 C155.2 57.9 154.4 58.2 157.3 57.5 C160.2 56.8 161.3 58.6 164.0 58.3 C166.7 58.0 165.5 56.3 167.3 56.3 C169.1 56.3 168.5 58.0 170.7 58.3 C172.9 58.6 172.6 59.9 175.7 57.5 C178.8 55.1 179.6 50.7 182.3 49.2 C185.0 47.7 183.5 46.2 185.7 51.7 C187.9 57.2 187.8 66.5 190.7 70.0 C193.6 73.5 193.2 64.5 196.5 65.0 C199.8 65.5 199.7 73.5 203.2 72.0 C206.7 70.5 206.9 61.7 209.8 59.2 C212.7 56.7 211.1 57.2 214.0 62.5 C216.9 67.8 217.4 77.0 220.7 79.2 C224.0 81.4 223.8 71.3 226.5 70.8 C229.2 70.3 228.9 76.8 230.7 77.5 C232.5 78.2 231.7 80.6 233.2 73.3 C234.7 66.0 234.1 56.2 236.5 50.0 C238.9 43.8 239.0 49.2 242.3 50.0 C245.6 50.8 245.7 51.7 249.0 53.0 C252.3 54.3 252.6 53.3 254.8 54.7 C257.0 56.1 255.7 54.4 257.3 58.3 C258.9 62.2 258.9 68.4 260.7 69.2 C262.5 70.0 262.7 62.6 264.0 61.3 C265.3 60.0 264.8 62.8 265.7 64.2 C266.6 65.6 266.4 68.3 267.3 66.7 C268.2 65.1 268.1 64.5 269.0 58.3 C269.9 52.1 268.9 46.5 270.7 43.3 C272.5 40.1 272.6 45.3 275.7 46.3 C278.8 47.3 278.8 46.8 282.3 47.0 C285.8 47.2 285.0 47.5 289.0 47.0 C293.0 46.5 292.8 45.2 297.3 45.3 C301.8 45.4 302.4 48.0 305.7 47.5 C309.0 47.0 307.4 42.8 309.8 43.3 C312.2 43.8 312.3 43.4 314.8 49.2 C317.3 55.0 316.5 63.5 319.0 65.0 C321.5 66.5 320.5 59.7 324.0 55.0 C327.5 50.3 327.8 50.2 332.3 47.5 C336.8 44.8 336.2 45.3 340.7 44.7 C345.2 44.1 345.0 45.9 349.0 45.3 C353.0 44.7 351.2 43.1 355.7 42.5 C360.2 41.9 360.8 42.0 365.7 43.0 C370.6 44.0 369.6 46.0 374.0 46.3 C378.4 46.6 377.8 43.0 382.3 44.2 C386.8 45.4 387.1 45.9 390.7 50.8 C394.3 55.7 393.3 63.8 395.7 62.5 C398.1 61.2 396.3 51.8 399.8 45.8 C403.3 39.8 405.2 40.9 409.0 40.0 C412.8 39.1 410.5 41.1 414.0 42.5 C417.5 43.9 417.4 44.2 422.3 45.3 C427.2 46.4 427.4 46.6 432.3 46.7 C437.2 46.8 437.1 44.3 440.7 45.8 C444.3 47.3 443.5 48.5 445.7 52.5 C447.9 56.5 447.6 57.7 449.0 60.8 C450.4 63.9 449.2 66.2 451.0 64.2 C452.8 62.2 453.1 57.3 455.7 53.3 C458.3 49.3 457.6 51.0 460.7 49.2 C463.8 47.4 463.8 47.5 467.3 46.7 C470.8 45.9 471.1 45.6 474.0 46.3 C476.9 47.0 476.4 46.7 478.2 49.2 C480.0 51.7 479.4 52.1 480.7 55.8 C482.0 59.5 481.9 62.1 483.2 63.0 C484.5 63.9 484.2 59.1 485.7 59.2 C487.2 59.3 487.2 66.6 489.0 63.3 C490.8 60.0 490.3 52.5 492.3 46.7 C494.3 40.9 493.8 42.6 496.5 41.7 C499.2 40.8 499.6 41.5 502.3 43.3 C505.0 45.1 504.3 41.8 506.5 48.3 C508.7 54.8 508.2 61.9 510.7 67.5 C513.2 73.1 513.9 67.9 515.7 69.2 C517.5 70.5 516.0 75.2 517.3 72.5 C518.6 69.8 518.0 64.5 520.7 59.2 C523.4 53.9 523.8 55.0 527.3 52.5 C530.8 50.0 530.4 50.0 534.0 50.0 C537.6 50.0 537.6 47.0 540.7 52.5 C543.8 58.0 543.3 65.5 545.7 70.8 C548.1 76.1 547.6 69.4 549.8 72.5 C552.0 75.6 551.8 76.5 554.0 82.5 C556.2 88.5 555.6 95.0 558.2 95.0 C560.8 95.0 561.5 84.5 563.7 82.5 C565.9 80.5 565.1 81.5 566.5 87.5 C567.9 93.5 567.9 94.5 569.0 105.0 C570.1 115.5 569.6 120.9 570.7 126.7 C571.8 132.5 571.9 134.3 573.2 126.7 C574.5 119.1 574.6 116.5 575.7 98.3 C576.8 80.1 576.0 71.0 577.3 58.3 C578.6 45.6 577.8 51.0 580.7 50.8 C583.6 50.6 585.1 57.5 588.2 57.5 C591.3 57.5 590.5 55.5 592.3 50.8 C594.1 46.1 592.1 39.0 594.8 39.7 C597.5 40.4 598.5 51.0 602.3 53.3 C606.1 55.6 605.9 50.2 609.0 48.3 C612.1 46.4 611.1 46.8 614.0 46.3 C616.9 45.8 616.3 47.1 619.8 46.3 C623.3 45.5 624.2 45.5 627.3 43.3 C630.4 41.1 629.3 37.5 631.5 38.0 C633.7 38.5 633.7 39.6 635.7 45.0 C637.7 50.4 637.0 49.0 639.0 58.3 C641.0 67.6 641.2 78.2 643.2 80.0 C645.2 81.8 644.3 71.7 646.5 65.0 C648.7 58.3 648.8 58.2 651.5 55.0 C654.2 51.8 653.6 53.1 656.5 53.0 C659.4 52.9 659.8 52.6 662.3 54.7 C664.8 56.8 663.7 55.0 665.7 60.8 C667.7 66.6 667.8 73.0 669.8 76.3 C671.8 79.6 671.4 78.3 673.2 73.3 C675.0 68.3 674.3 63.4 676.5 57.5 C678.7 51.6 679.0 51.8 681.5 51.3 C684.0 50.8 683.5 52.4 685.7 55.8 C687.9 59.2 687.4 64.2 689.8 64.2 C692.2 64.2 692.3 58.9 694.8 55.8 C697.3 52.7 696.1 51.8 699.0 52.5 C701.9 53.2 702.2 57.3 705.7 58.3 C709.2 59.3 709.0 58.1 712.3 56.3 C715.6 54.5 715.3 52.9 718.2 51.7 C721.1 50.5 720.3 48.2 723.2 51.7 C726.1 55.2 725.9 60.7 729.0 65.0 C732.1 69.3 730.8 68.1 734.8 68.0 C738.8 67.9 740.0 65.7 744.0 64.7 C748.0 63.7 745.8 66.9 749.8 64.2 C753.8 61.5 754.8 57.7 759.0 54.7 C763.2 51.7 761.2 53.5 765.7 53.0 C770.2 52.5 771.3 52.7 775.7 53.0 C780.1 53.3 780.5 53.9 782.3 54.2" fill="none" stroke="#156a15" stroke-width="1.5" stroke-linejoin="round"/>
<text x="66" y="46" font-size="10.5" fill="#444" font-family="Liberation Sans">X=1</text>
<text x="797" y="103" font-size="9.9" fill="#2f8a2f" font-family="Liberation Sans">ROI 001: 399,9 °C</text>

<line x1="941.5" y1="5" x2="941.5" y2="152" stroke="#777" stroke-width="1.5"/>
</svg>
<div class="a" style="left:600px;top:796px;width:184px;text-align:center;font-size:10.5px;color:#222">ROI: Linienprofile</div>
<div class="a" style="left:1165.0px;top:795px;width:1px;height:164px;background:#fafafa"></div>
<div class="a" style="left:1183.0px;top:795px;width:1px;height:164px;background:#fafafa"></div>

<div class="a" style="left:1166px;top:168px;width:1.5px;height:572px;background:#fbfbfb"></div>
<div class="a" style="left:1166px;top:797px;width:1.5px;height:160px;background:#fbfbfb"></div>
<div class="a" style="left:1183px;top:168px;width:1.5px;height:572px;background:#fbfbfb"></div>
<div class="a" style="left:1183px;top:797px;width:1.5px;height:160px;background:#fbfbfb"></div>
<div class="a" style="left:1183px;top:451px;width:2px;height:6px;background:#f0f0f0"></div>
<div class="a" style="left:1183px;top:873px;width:2px;height:6px;background:#f0f0f0"></div>
<svg class="a" style="left:0;top:0" width="1200" height="961"><path d="M1169.0 179.5 L1172.5 176 L1176.0 179.5 M1169.0 730.5 L1172.5 734 L1176.0 730.5 M1186.8 179.5 L1190.3 176 L1193.8 179.5 M1186.8 730.5 L1190.3 734 L1193.8 730.5 M1186.8 441.0 L1190.3 444.5 L1193.8 441.0 M1186.8 468.5 L1190.3 465 L1193.8 468.5 M1169.0 809.5 L1172.5 806 L1176.0 809.5 M1169.0 944.5 L1172.5 948 L1176.0 944.5 M1186.8 809.5 L1190.3 806 L1193.8 809.5 M1186.8 944.5 L1190.3 948 L1193.8 944.5 M1186.8 863.5 L1190.3 867 L1193.8 863.5 M1186.8 890.5 L1190.3 887 L1193.8 890.5" fill="none" stroke="#c4c4c4" stroke-width="1.6"/></svg>
<div class="a" style="left:0;top:0;width:1px;height:961px;background:#3c86d9"></div>
<div class="a" style="left:0;top:957px;width:1200px;height:2.5px;background:#fafafa"></div>
<div class="a" style="left:0;top:959.5px;width:1200px;height:1.5px;background:#3c86d9"></div>
</div>
</body></html>
